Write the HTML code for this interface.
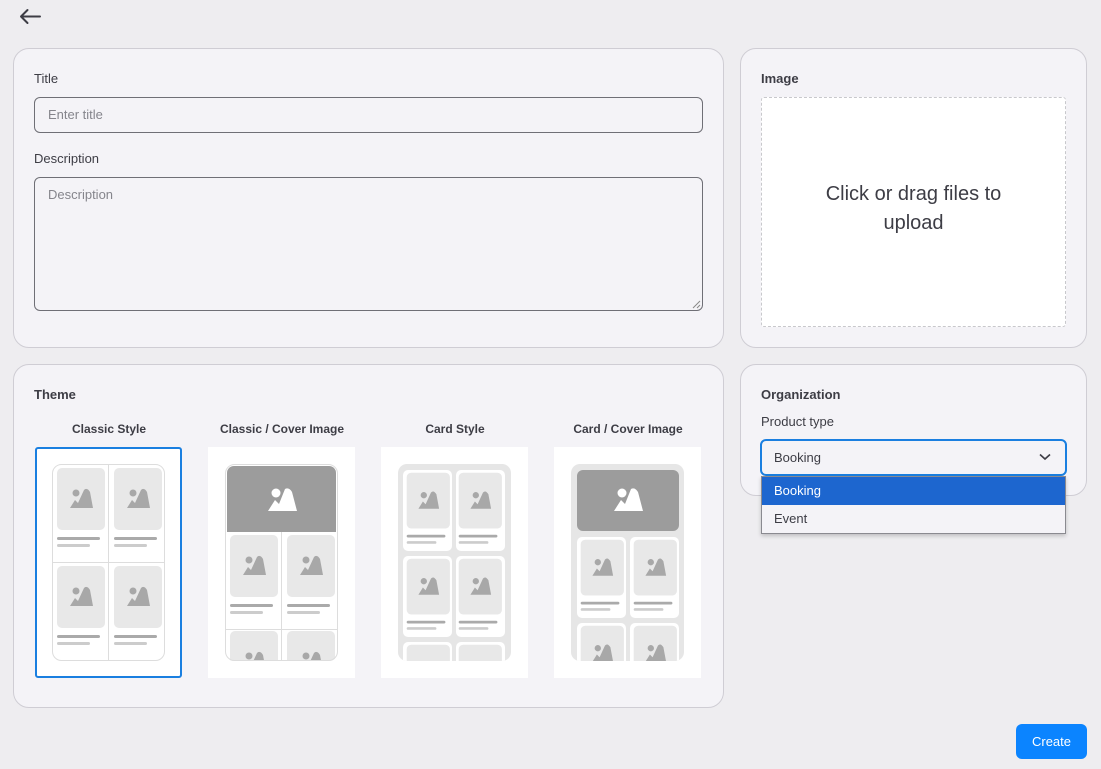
<!DOCTYPE html>
<html><head><meta charset="utf-8"><style>
*{box-sizing:border-box;margin:0;padding:0}
body{width:1101px;height:769px;background:#eeedf0;font-family:"Liberation Sans",sans-serif;color:#3d3d45;position:relative;overflow:hidden}
.panel{position:absolute;background:#f4f3f7;border:1px solid #cfcdd4;border-radius:16px}
.lbl{position:absolute;font-size:13px;color:#3d3d45}
.b{font-weight:bold}
.inp{position:absolute;border:1px solid #6f6f76;border-radius:6px;background:#f4f3f7;font-size:13px;color:#85858c;padding-left:13px}
.th{position:absolute;background:#fff;width:147px;height:231px}
.tt{position:absolute;font-size:12px;font-weight:bold;width:170px;text-align:center;color:#3d3d45}
</style></head><body>
<svg style="position:absolute;left:18px;top:8px" width="24" height="18" viewBox="0 0 24 18"><path d="M3 8.5H22M3 8.5L9.5 2M3 8.5L9.5 15" stroke="#3d3d45" stroke-width="2" fill="none" stroke-linecap="round"/></svg>

<div class="panel" style="left:13px;top:48px;width:711px;height:300px"></div>
<div class="lbl" style="left:34px;top:71px">Title</div>
<div class="inp" style="left:34px;top:97px;width:669px;height:36px;line-height:34px">Enter title</div>
<div class="lbl" style="left:34px;top:151px">Description</div>
<div class="inp" style="left:34px;top:177px;width:669px;height:134px;padding-top:9px">Description
<svg style="position:absolute;right:1px;bottom:1px" width="9" height="9"><path d="M8 1L1 8M8 5L5 8" stroke="#888" stroke-width="1"/></svg></div>

<div class="panel" style="left:740px;top:48px;width:347px;height:300px"></div>
<div class="lbl b" style="left:761px;top:71px">Image</div>
<div style="position:absolute;left:761px;top:97px;width:305px;height:230px;background:#fff;border:1px dashed #c8c8cc;border-radius:3px;display:flex;align-items:center;justify-content:center;text-align:center;font-size:20px;line-height:29px;color:#3d3d45;padding-bottom:6px">Click or drag files to<br>upload</div>

<div class="panel" style="left:13px;top:364px;width:711px;height:344px"></div>
<div class="lbl b" style="left:34px;top:387px">Theme</div>
<div class="tt" style="left:24px;top:422px">Classic Style</div>
<div class="tt" style="left:197px;top:422px">Classic / Cover Image</div>
<div class="tt" style="left:370px;top:422px">Card Style</div>
<div class="tt" style="left:543px;top:422px">Card / Cover Image</div>

<svg width="0" height="0" style="position:absolute"><defs>
<g id="m"><circle cx="-5" cy="-6" r="3.5" fill="#a8a8a8"/><path d="M-11 9L-6 1L-3 4L3 -9Q6 -12 9 -7L12 9Z" fill="#a8a8a8"/></g>
<g id="mw"><circle cx="-6" cy="-7" r="4.5" fill="#fff"/><path d="M-14 11L-7 0L-3 4L3 -11Q7 -13 10 -8L15 11Z" fill="#fff"/></g>
<g id="cell"><rect x="3" y="3" width="48" height="62" rx="5" fill="#e8e8e8"/><use href="#m" x="27" y="34"/><rect x="3" y="72" width="43" height="3" rx="1.5" fill="#aaa"/><rect x="3" y="79" width="33" height="3" rx="1.5" fill="#ccc"/></g>
<clipPath id="ph"><rect x="0" y="0" width="113" height="197" rx="9"/></clipPath>
</defs></svg>

<div class="th" style="left:35px;top:447px;border:2px solid #1a7fe0;border-radius:3px">
<svg style="position:absolute;left:15px;top:15px" width="114" height="198"><g clip-path="url(#ph)"><rect width="113" height="197" fill="#fff"/><use href="#cell" x="2" y="1"/><use href="#cell" x="59" y="1"/><use href="#cell" x="2" y="99"/><use href="#cell" x="59" y="99"/><path d="M56.5 0V197M0 98.5H113" stroke="#ddd"/></g><rect x=".5" y=".5" width="112" height="196" rx="9" fill="none" stroke="#ddd"/></svg></div>
<div class="th" style="left:208px;top:447px">
<svg style="position:absolute;left:17px;top:17px" width="114" height="198"><g clip-path="url(#ph)"><rect width="113" height="197" fill="#fff"/><rect x="2" y="2" width="109" height="66" rx="7" fill="#9c9c9c"/><rect x="2" y="40" width="109" height="28" fill="#9c9c9c"/><use href="#mw" x="57" y="36"/><use href="#cell" x="2" y="68"/><use href="#cell" x="59" y="68"/><use href="#cell" x="2" y="164"/><use href="#cell" x="59" y="164"/><path d="M56.5 68V197M0 165.5H113" stroke="#ddd"/></g><rect x=".5" y=".5" width="112" height="196" rx="9" fill="none" stroke="#ddd"/></svg></div>
<div class="th" style="left:381px;top:447px">
<svg style="position:absolute;left:17px;top:17px" width="114" height="198"><g clip-path="url(#ph)"><rect width="113" height="197" fill="#e6e6e6"/>
<rect x="5" y="6" width="49" height="81" rx="5" fill="#fff"/><rect x="58" y="6" width="49" height="81" rx="5" fill="#fff"/><rect x="5" y="92" width="49" height="81" rx="5" fill="#fff"/><rect x="58" y="92" width="49" height="81" rx="5" fill="#fff"/><rect x="5" y="178" width="49" height="30" rx="5" fill="#fff"/><rect x="58" y="178" width="49" height="30" rx="5" fill="#fff"/>
<g transform="translate(6,6) scale(0.9)"><use href="#cell"/></g><g transform="translate(58,6) scale(0.9)"><use href="#cell"/></g><g transform="translate(6,92) scale(0.9)"><use href="#cell"/></g><g transform="translate(58,92) scale(0.9)"><use href="#cell"/></g><g transform="translate(6,178) scale(0.9)"><use href="#cell"/></g><g transform="translate(58,178) scale(0.9)"><use href="#cell"/></g></g></svg></div>
<div class="th" style="left:554px;top:447px">
<svg style="position:absolute;left:17px;top:17px" width="114" height="198"><g clip-path="url(#ph)"><rect width="113" height="197" fill="#e6e6e6"/><rect x="6" y="6" width="102" height="61" rx="6" fill="#9c9c9c"/><use href="#mw" x="57" y="36"/>
<rect x="6" y="73" width="49" height="81" rx="5" fill="#fff"/><rect x="59" y="73" width="49" height="81" rx="5" fill="#fff"/><rect x="6" y="159" width="49" height="60" rx="5" fill="#fff"/><rect x="59" y="159" width="49" height="60" rx="5" fill="#fff"/>
<g transform="translate(7,73) scale(0.9)"><use href="#cell"/></g><g transform="translate(60,73) scale(0.9)"><use href="#cell"/></g><g transform="translate(7,159) scale(0.9)"><use href="#cell"/></g><g transform="translate(60,159) scale(0.9)"><use href="#cell"/></g></g></svg></div>

<div class="panel" style="left:740px;top:364px;width:347px;height:132px"></div>
<div class="lbl b" style="left:761px;top:387px">Organization</div>
<div class="lbl" style="left:761px;top:414px">Product type</div>
<div style="position:absolute;left:760px;top:439px;width:307px;height:37px;border:2px solid #1a7fe0;border-radius:6px;background:#f4f3f7;font-size:13px;line-height:33px;padding-left:12px;color:#3d3d45">Booking
<svg style="position:absolute;right:14px;top:12px" width="12" height="8" viewBox="0 0 12 8"><path d="M1 1.5L6 6L11 1.5" stroke="#3d3d45" stroke-width="1.6" fill="none"/></svg></div>
<div style="position:absolute;left:761px;top:476px;width:305px;height:58px;background:#f4f3f7;border:1px solid #8a8a90;box-shadow:0 2px 4px rgba(0,0,0,.2);font-size:13px">
<div style="height:28px;background:#1d66cf;color:#fff;line-height:28px;padding-left:12px">Booking</div>
<div style="height:28px;line-height:28px;padding-left:12px;color:#3d3d45">Event</div></div>

<div style="position:absolute;left:1016px;top:724px;width:71px;height:35px;background:#0b84ff;border-radius:6px;color:#fff;font-size:13px;text-align:center;line-height:35px">Create</div>
</body></html>
